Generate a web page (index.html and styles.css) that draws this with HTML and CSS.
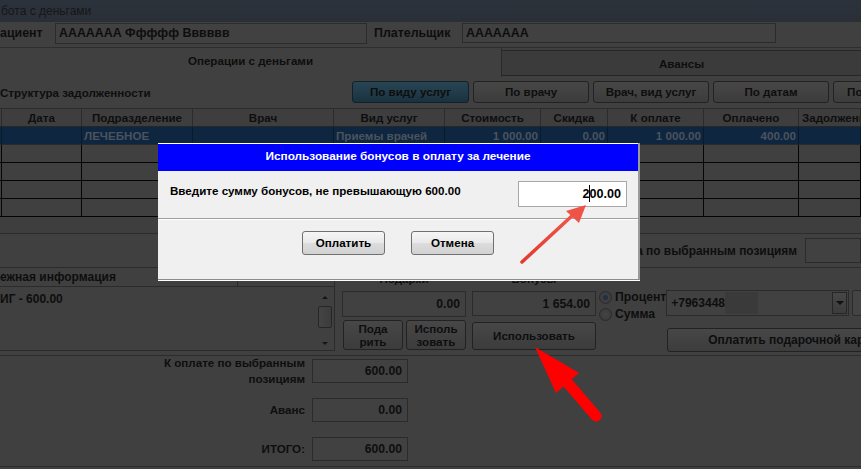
FILE: index.html
```html
<!DOCTYPE html>
<html lang="ru">
<head>
<meta charset="utf-8">
<title>Работа с деньгами</title>
<link rel="stylesheet" href="styles.css">
</head>
<body>
<div class="win">
  <div class="titlebar">бота с деньгами</div>

  <div class="persons">
    <span class="lbl lbl-pat">ациент</span>
    <div class="field f-pat">ААААААА Ффффф Вввввв</div>
    <span class="lbl lbl-payer">Плательщик</span>
    <div class="field f-payer">ААААААА</div>
  </div>

  <div class="tabs">
    <div class="tab tab-active">Операции с деньгами</div>
    <div class="tab tab-other">Авансы</div>
  </div>

  <div class="toolbar">
    <span class="section-title">Структура задолженности</span>
    <div class="tbtns">
      <div class="btn tbtn selected">По виду услуг</div>
      <div class="btn tbtn">По врачу</div>
      <div class="btn tbtn">Врач, вид услуг</div>
      <div class="btn tbtn">По датам</div>
      <div class="btn tbtn">По отделениям</div>
    </div>
  </div>

  <div class="table">
    <div class="grid">
      <div class="th"></div><div class="th">Дата</div><div class="th">Подразделение</div><div class="th">Врач</div><div class="th">Вид услуг</div><div class="th">Стоимость</div><div class="th">Скидка</div><div class="th">К оплате</div><div class="th">Оплачено</div><div class="th left">Задолженность</div>

      <div class="td sel"></div><div class="td sel"></div><div class="td sel left">ЛЕЧЕБНОЕ</div><div class="td sel"></div><div class="td sel left">Приемы врачей</div><div class="td sel num">1 000.00</div><div class="td sel num">0.00</div><div class="td sel num">1 000.00</div><div class="td sel num">400.00</div><div class="td sel"></div>

      <div class="td"></div><div class="td"></div><div class="td"></div><div class="td"></div><div class="td"></div><div class="td"></div><div class="td"></div><div class="td"></div><div class="td"></div><div class="td"></div>
      <div class="td"></div><div class="td"></div><div class="td"></div><div class="td"></div><div class="td"></div><div class="td"></div><div class="td"></div><div class="td"></div><div class="td"></div><div class="td"></div>
      <div class="td"></div><div class="td"></div><div class="td"></div><div class="td"></div><div class="td"></div><div class="td"></div><div class="td"></div><div class="td"></div><div class="td"></div><div class="td"></div>
      <div class="td"></div><div class="td"></div><div class="td"></div><div class="td"></div><div class="td"></div><div class="td"></div><div class="td"></div><div class="td"></div><div class="td"></div><div class="td"></div>
    </div>
  </div>

  <div class="sumrow">
    <span class="lbl">Сумма по выбранным позициям</span>
    <div class="field f-sum"></div>
  </div>

  <div class="money">
    <div class="money-left">
      <div class="mhead">
        <div class="mh mh1">ежная информация</div>
        <div class="mh mh2"></div>
      </div>
      <div class="memo">
        <div class="memo-text">ИГ - 600.00</div>
        <div class="scroll">
          <span class="arr up"></span>
          <span class="thumb"></span>
          <span class="arr down"></span>
        </div>
      </div>
    </div>
    <div class="money-right">
      <div class="mcol gifts">
        <div class="mlbl">Подарки</div>
        <div class="field mfield">0.00</div>
        <div class="gbtns">
          <div class="btn sbtn">Пода<br>рить</div>
          <div class="btn sbtn">Исполь<br>зовать</div>
        </div>
      </div>
      <div class="mcol bonus">
        <div class="mlbl">Бонусы</div>
        <div class="field mfield bfield">1 654.00</div>
        <div class="btn usebtn">Использовать</div>
      </div>
      <div class="radios">
        <div class="radio"><span class="dot checked"></span>Процент</div>
        <div class="radio"><span class="dot"></span>Сумма</div>
      </div>
      <div class="phone">
        <div class="combo-row">
          <div class="combo">
            <span class="ph">+7963448</span><span class="blur"></span>
            <span class="dd"><span class="tri"></span></span>
          </div>
          <div class="combo-extra"></div>
        </div>
        <div class="btn cardbtn">Оплатить подарочной карты</div>
      </div>
    </div>
  </div>

  <div class="totals">
    <span class="tlbl">К оплате по выбранным<br>позициям</span><div class="field tfield">600.00</div>
    <span class="tlbl">Аванс</span><div class="field tfield">0.00</div>
    <span class="tlbl">ИТОГО:</span><div class="field tfield">600.00</div>
  </div>
</div>

<div class="dialog">
  <div class="dtitle">Использование бонусов в оплату за лечение</div>
  <div class="dbody">
    <span class="dlabel">Введите сумму бонусов, не превышающую 600.00</span>
    <div class="dinput">2<span class="caret"></span>00.00</div>
  </div>
  <div class="dfoot">
    <div class="dbtn">Оплатить</div>
    <div class="dbtn">Отмена</div>
  </div>
</div>

<svg class="marks" width="861" height="469" viewBox="0 0 861 469">
  <defs>
    <linearGradient id="g1" x1="0" y1="1" x2="1" y2="0">
      <stop offset="0" stop-color="#e23b2e"/>
      <stop offset="1" stop-color="#f0564a"/>
    </linearGradient>
  </defs>
  <path d="M522 262 L574 214" stroke="url(#g1)" stroke-width="3.5" stroke-linecap="round" fill="none"/>
  <polygon points="586,205 566,211 579,223" fill="#ef5346"/>
  <path d="M596 416 L566 381" stroke="#ff0000" stroke-width="11" stroke-linecap="round" fill="none"/>
  <polygon points="535,347 556,393 579,373" fill="#ff0000"/>
</svg>
</body>
</html>
```

FILE: styles.css
```css
* { box-sizing: border-box; }

html, body {
  margin: 0;
  padding: 0;
}

body {
  width: 861px;
  height: 469px;
  overflow: hidden;
  position: relative;
  background: #404040;
  font-family: "Liberation Sans", Arial, sans-serif;
  font-size: 11.6px;
  font-weight: bold;
  color: #0e0e0e;
}

.win {
  display: flex;
  flex-direction: column;
  width: 861px;
}

.titlebar {
  height: 22px;
  line-height: 22px;
  padding-left: 1px;
  font-weight: normal;
  font-size: 12px;
  color: #151618;
  background: linear-gradient(#2c323b, #2a2f37);
}

.field {
  background: #414141;
  border: 1px solid #2b2b2b;
  white-space: nowrap;
  overflow: hidden;
}

/* patient row */
.persons {
  height: 26px;
  display: flex;
  align-items: flex-start;
  border-bottom: 1px solid #2e2e2e;
}
.lbl { white-space: nowrap; }
.lbl-pat { width: 55px; line-height: 21px; margin-top: 1px; font-size: 12.4px; }
.f-pat { width: 312px; height: 21px; margin-top: 1px; line-height: 19px; padding-left: 3px; font-size: 12.4px; }
.lbl-payer { margin-left: 7px; width: 88px; line-height: 20px; margin-top: 1px; font-size: 12.4px; }
.f-payer { width: 314px; height: 20px; margin-top: 1px; line-height: 18px; padding-left: 3px; font-size: 12.4px; }

/* tabs */
.tabs {
  height: 29px;
  display: flex;
  align-items: flex-start;
}
.tab { text-align: center; white-space: nowrap; }
.tab-active {
  width: 502px;
  height: 29px;
  line-height: 26px;
  border-right: 1px solid #2a2a2a;
}
.tab-other {
  width: 359px;
  margin-top: 2px;
  height: 26px;
  line-height: 26px;
  background: #3b3b3b;
  border-top: 1px solid #262626;
  border-bottom: 1px solid #262626;
}

/* toolbar */
.toolbar {
  height: 32px;
  display: flex;
  align-items: center;
  border-bottom: 1px solid #2c2c2c;
  padding-bottom: 1px;
}
.section-title { flex: 0 0 352px; white-space: nowrap; }
.tbtns { display: flex; gap: 4px; }
.btn {
  background: linear-gradient(#474747, #3c3c3c);
  border: 1px solid #222;
  border-radius: 3px;
  text-align: center;
  white-space: nowrap;
}
.tbtn { flex: 0 0 116px; height: 22px; line-height: 20px; }
.tbtn.selected {
  flex-basis: 117px;
  background: linear-gradient(#284553, #1a3240);
  border-color: #12202a;
}

/* table */
.table {
  height: 125px;
  border-bottom: 1px solid #2c2c2c;
  background: #3e3e3e;
}
.grid {
  display: grid;
  grid-template-columns: 2px 80px 111px 141px 111px 96px 67px 96px 95px 62px;
  grid-auto-rows: 18px;
}
.th {
  border-right: 1px solid #2b2b2b;
  border-bottom: 1px solid #262626;
  text-align: center;
  line-height: 17px;
  white-space: nowrap;
  overflow: hidden;
}
.th.left { text-align: left; padding-left: 3px; }
.td {
  border-right: 1px solid #050505;
  border-bottom: 1px solid #050505;
  background: #404040;
  line-height: 17px;
  white-space: nowrap;
  overflow: hidden;
}
.td.sel {
  background: #0f2640;
  border-right-color: #091a2c;
  border-bottom-color: #2a2a2a;
  color: #4b535d;
}
.td.left { padding-left: 2px; }
.td.num { text-align: right; padding-right: 2px; }

/* sum row */
.sumrow {
  height: 34px;
  display: flex;
  align-items: center;
  justify-content: flex-end;
  gap: 8px;
  border-bottom: 1px solid #2c2c2c;
}
.sumrow .lbl { font-size: 11.9px; }
.f-sum { width: 56px; height: 25px; }

/* money section */
.money {
  display: flex;
  height: 88px;
  border-bottom: 1px solid #2c2c2c;
}
.money-left {
  width: 335px;
  display: flex;
  flex-direction: column;
}
.mhead { display: flex; height: 19px; }
.mh {
  border-right: 1px solid #2b2b2b;
  border-bottom: 1px solid #2b2b2b;
  line-height: 18px;
  white-space: nowrap;
}
.mh1 { width: 238px; font-size: 12px; }
.mh2 { width: 97px; }
.memo {
  height: 64px;
  display: flex;
  border-right: 1px solid #2b2b2b;
  border-bottom: 1px solid #2b2b2b;
}
.memo-text { flex: 1; padding-top: 5px; font-size: 12px; }
.scroll {
  width: 17px;
  margin-right: 1px;
  display: flex;
  flex-direction: column;
  align-items: center;
  padding: 9px 0 5px;
}
.arr { width: 0; height: 0; border-left: 3px solid transparent; border-right: 3px solid transparent; }
.arr.up { border-bottom: 3px solid #151515; }
.arr.down { border-top: 3px solid #151515; margin-top: auto; }
.thumb {
  width: 14px;
  height: 22px;
  border: 1px solid #262626;
  border-radius: 2px;
  background: linear-gradient(90deg, #444, #3c3c3c);
  margin-top: 7px;
}

.money-right {
  flex: 1;
  display: flex;
  padding-left: 7px;
  overflow: hidden;
}
.mcol { display: flex; flex-direction: column; width: 125px; }
.mlbl { height: 23px; text-align: center; line-height: 22px; }
.mfield {
  height: 26px;
  text-align: right;
  padding-right: 5px;
  line-height: 24px;
  font-size: 12.2px;
}
.gbtns { display: flex; gap: 3px; margin-top: 3px; padding-left: 1px; }
.sbtn {
  width: 60px;
  height: 30px;
  line-height: 13px;
  padding-top: 1px;
}
.bonus { margin-left: 6px; }
.bfield { height: 25px; }
.usebtn {
  margin-top: 6px;
  height: 28px;
  line-height: 26px;
  width: 124px;
}
.radios {
  margin-left: 3px;
  padding-top: 21px;
  display: flex;
  flex-direction: column;
  gap: 1px;
  width: 70px;
}
.radio {
  display: flex;
  align-items: center;
  height: 16px;
  font-size: 12.2px;
  gap: 3px;
}
.dot {
  width: 13px;
  height: 13px;
  border-radius: 50%;
  border: 1px solid #2a2a2a;
  background: radial-gradient(#444, #383838);
  position: relative;
  flex: 0 0 13px;
}
.dot.checked::after {
  content: "";
  position: absolute;
  left: 3px;
  top: 3px;
  width: 5px;
  height: 5px;
  border-radius: 50%;
  background: #1c3142;
}
.phone { display: flex; flex-direction: column; padding-top: 22px; }
.combo-row { display: flex; gap: 3px; }
.combo {
  width: 183px;
  height: 26px;
  display: flex;
  align-items: center;
  border: 1px solid #2b2b2b;
  background: #414141;
  padding-left: 4px;
  font-size: 12px;
}
.ph { white-space: nowrap; }
.blur { width: 33px; height: 22px; background: #3a3a3a; }
.dd {
  margin-left: auto;
  margin-right: 1px;
  width: 15px;
  height: 22px;
  border: 1px solid #262626;
  background: linear-gradient(#474747, #3c3c3c);
  display: flex;
  align-items: center;
  justify-content: center;
}
.tri { width: 0; height: 0; border-left: 4px solid transparent; border-right: 4px solid transparent; border-top: 4px solid #111; }
.combo-extra { width: 10px; height: 26px; border: 1px solid #2b2b2b; border-radius: 2px; background: #444; }
.cardbtn {
  margin-top: 12px;
  width: 254px;
  height: 24px;
  line-height: 22px;
  margin-left: 1px;
  font-size: 12px;
}

/* totals */
.totals {
  height: 111px;
  display: grid;
  grid-template-columns: 305px 96px;
  grid-auto-rows: 24px;
  column-gap: 7px;
  row-gap: 15px;
  align-items: center;
  padding-top: 3px;
  border-bottom: 1px solid #2c2c2c;
}
.tlbl { text-align: right; line-height: 16px; white-space: nowrap; }
.tfield {
  height: 24px;
  text-align: right;
  padding-right: 5px;
  line-height: 22px;
  font-size: 12.2px;
}

/* dialog */
.dialog {
  position: absolute;
  left: 158px;
  top: 143px;
  width: 482px;
  height: 137px;
  background: #f0f0f0;
  border-right: 2px solid #9a9a9a;
  border-bottom: 1px solid #8c8c8c;
  box-shadow: 0 1px 0 #ffffff;
  display: flex;
  flex-direction: column;
}
.dtitle {
  height: 28px;
  background: #0000ff;
  color: #ffffff;
  text-align: center;
  line-height: 25px;
  border-top: 1px solid #ffffff;
  font-size: 11.8px;
}
.dbody {
  height: 48px;
  display: flex;
  justify-content: space-between;
  align-items: flex-start;
  padding: 10px 11px 0 12px;
  border-bottom: 1px solid #a0a0a0;
}
.dlabel { margin-top: 2px; line-height: 16px; color: #000; }
.dinput {
  width: 109px;
  height: 26px;
  background: #fff;
  border: 1px solid #a8a8a8;
  text-align: right;
  padding-right: 5px;
  line-height: 24px;
  font-size: 12.6px;
  color: #000;
}
.caret {
  display: inline-block;
  width: 0;
  height: 17px;
  vertical-align: -4px;
  border-left: 1px solid #000;
  margin-right: -1px;
}
.dfoot {
  flex: 1;
  display: flex;
  justify-content: center;
  gap: 26px;
  padding-top: 11px;
  border-top: 1px solid #ffffff;
}
.dbtn {
  width: 83px;
  height: 24px;
  line-height: 22px;
  text-align: center;
  border: 1px solid #707070;
  border-radius: 3px;
  background: linear-gradient(#f6f6f6 0%, #e9e9e9 50%, #dcdcdc 51%, #d2d2d2 100%);
  color: #000;
}

.marks {
  position: absolute;
  left: 0;
  top: 0;
  pointer-events: none;
}
```
